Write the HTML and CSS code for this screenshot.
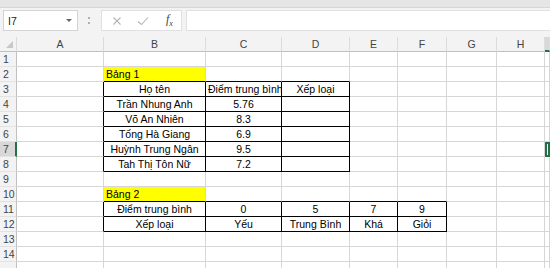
FILE: index.html
```html
<!DOCTYPE html>
<html lang="vi">
<head>
    <meta charset="UTF-8">
    <meta name="viewport" content="width=device-width, initial-scale=1.0">
    <title>Bảng xếp loại</title>
    <link rel="stylesheet" href="styles.css">
</head>
<body>
    <div class="ribbon"></div>
    <div class="formula-bar">
        <div class="name-box">
            <span>I7</span>
            <span class="caret"></span>
        </div>
        <div class="grip"></div>
        <div class="fx-buttons">
            <svg class="fx-icon" width="10" height="10" viewBox="0 0 10 10">
                <path d="M1.5 1.5 L8.5 8.5 M8.5 1.5 L1.5 8.5" stroke="#b5b5b5" stroke-width="1.1" fill="none"/>
            </svg>
            <svg class="fx-icon" width="12" height="10" viewBox="0 0 12 10">
                <path d="M1 5.5 L4.5 8.5 L11 1.5" stroke="#b5b5b5" stroke-width="1.1" fill="none"/>
            </svg>
            <span class="fx">f<sub>x</sub></span>
        </div>
        <div class="formula-input"></div>
    </div>

    <table class="sheet">
        <colgroup>
            <col class="w-head">
            <col class="w-a">
            <col class="w-b">
            <col class="w-c">
            <col class="w-d">
            <col class="w-e">
            <col class="w-f">
            <col class="w-g">
            <col class="w-h">
            <col class="w-i">
        </colgroup>
        <tr class="col-head">
            <th class="corner"><span class="corner-mark"></span></th>
            <th>A</th><th>B</th><th>C</th><th>D</th><th>E</th><th>F</th><th>G</th><th>H</th><th class="sel-col"></th>
        </tr>
        <tr>
            <th>1</th><td></td><td></td><td></td><td></td><td></td><td></td><td></td><td></td><td></td>
        </tr>
        <tr>
            <th>2</th><td></td><td class="title bb">Bảng 1</td><td class="bb"></td><td class="bb"></td><td></td><td></td><td></td><td></td><td></td>
        </tr>
        <tr>
            <th>3</th><td class="br"></td><td class="box">Họ tên</td><td class="box">Điểm trung bình</td><td class="box">Xếp loại</td><td></td><td></td><td></td><td></td><td></td>
        </tr>
        <tr>
            <th>4</th><td class="br"></td><td class="box">Trần Nhung Anh</td><td class="box">5.76</td><td class="box"></td><td></td><td></td><td></td><td></td><td></td>
        </tr>
        <tr>
            <th>5</th><td class="br"></td><td class="box">Võ An Nhiên</td><td class="box">8.3</td><td class="box"></td><td></td><td></td><td></td><td></td><td></td>
        </tr>
        <tr>
            <th>6</th><td class="br"></td><td class="box">Tống Hà Giang</td><td class="box">6.9</td><td class="box"></td><td></td><td></td><td></td><td></td><td></td>
        </tr>
        <tr>
            <th class="sel-row">7</th><td class="br"></td><td class="box">Huỳnh Trung Ngân</td><td class="box">9.5</td><td class="box"></td><td></td><td></td><td></td><td></td><td class="selected"></td>
        </tr>
        <tr>
            <th>8</th><td class="br"></td><td class="box">Tah Thị Tôn Nữ</td><td class="box">7.2</td><td class="box"></td><td></td><td></td><td></td><td></td><td></td>
        </tr>
        <tr>
            <th>9</th><td></td><td></td><td></td><td></td><td></td><td></td><td></td><td></td><td></td>
        </tr>
        <tr>
            <th>10</th><td></td><td class="title bb">Bảng 2</td><td class="bb"></td><td class="bb"></td><td class="bb"></td><td class="bb"></td><td></td><td></td><td></td>
        </tr>
        <tr>
            <th>11</th><td class="br"></td><td class="box">Điểm trung bình</td><td class="box">0</td><td class="box">5</td><td class="box">7</td><td class="box">9</td><td></td><td></td><td></td>
        </tr>
        <tr>
            <th>12</th><td class="br"></td><td class="box">Xếp loại</td><td class="box">Yếu</td><td class="box">Trung Bình</td><td class="box">Khá</td><td class="box">Giỏi</td><td></td><td></td><td></td>
        </tr>
        <tr>
            <th>13</th><td></td><td></td><td></td><td></td><td></td><td></td><td></td><td></td><td></td>
        </tr>
        <tr>
            <th>14</th><td></td><td></td><td></td><td></td><td></td><td></td><td></td><td></td><td></td>
        </tr>
        <tr>
            <th></th><td></td><td></td><td></td><td></td><td></td><td></td><td></td><td></td><td></td>
        </tr>
    </table>
</body>
</html>
```

FILE: styles.css
```css
:root {
    --toolbar: #f3f3f3;
    --ribbon: #e6e6e6;
    --grid: #d6d6d6;
    --head: #f3f3f3;
    --head-line: #c0c0c0;
    --head-text: #444;
    --head-sel: #d8d8d8;
    --green: #217346;
    --yellow: #ffff00;
}

* {
    box-sizing: border-box;
    margin: 0;
    padding: 0;
}

body {
    width: 550px;
    height: 268px;
    overflow: hidden;
    background: #fff;
    font-family: 'Liberation Sans', Arial, sans-serif;
    font-size: 10.5px;
    color: #000;
}

.ribbon {
    height: 8px;
    background: var(--ribbon);
    border-bottom: 1px solid #d6d6d6;
}

.formula-bar {
    display: flex;
    align-items: center;
    height: 29px;
    padding: 1px 0 5px 3px;
    background: var(--toolbar);
}

.name-box {
    display: flex;
    align-items: center;
    justify-content: space-between;
    width: 75px;
    height: 21px;
    padding: 0 5px 0 4px;
    background: #fff;
    border: 1px solid #d4d4d4;
    color: #222;
}

.caret {
    width: 0;
    height: 0;
    border-left: 3px solid transparent;
    border-right: 3px solid transparent;
    border-top: 3px solid #666;
}

.grip {
    width: 2px;
    height: 7px;
    margin: 0 11px 0 10px;
    border-left: 2px dotted #b0b0b0;
}

.fx-buttons {
    display: flex;
    align-items: center;
    width: 81px;
    height: 21px;
    padding: 0 0 0 10px;
    background: #fff;
    border: 1px solid #e0e0e0;
}

.fx-icon {
    margin-right: 15px;
}

.fx {
    margin-left: 2px;
    font-family: 'Liberation Serif', serif;
    font-style: italic;
    font-size: 12px;
    color: #444;
}

.fx sub {
    font-size: 8px;
}

.formula-input {
    flex: 1;
    height: 21px;
    margin-left: 4px;
    background: #fff;
    border: 1px solid #e0e0e0;
    border-right: none;
}

.sheet {
    table-layout: fixed;
    width: 550px;
    border-collapse: separate;
    border-spacing: 0;
}

.w-head { width: 17px; }
.w-a { width: 87px; }
.w-b { width: 102px; }
.w-c { width: 76px; }
.w-d { width: 68px; }
.w-e { width: 48px; }
.w-f { width: 49px; }
.w-g { width: 50px; }
.w-h { width: 48px; }
.w-i { width: 5px; }

.sheet td,
.sheet th {
    height: 14px;
    line-height: 14px;
    padding: 0 2px;
    white-space: nowrap;
    overflow: hidden;
    vertical-align: bottom;
    border-right: 1px solid var(--grid);
    border-bottom: 1px solid var(--grid);
}

.sheet th {
    padding: 0 0 0 3px;
    background: var(--head);
    color: var(--head-text);
    font-weight: normal;
    text-align: left;
    border-right-color: var(--head-line);
    border-bottom-color: #e2e2e2;
}

.col-head th {
    height: 15px;
    padding: 0;
    text-align: center;
    vertical-align: middle;
    border-right-color: #dcdcdc;
    border-bottom: 1px solid var(--head-line);
}

.corner {
    position: relative;
}

.corner-mark {
    position: absolute;
    right: 3px;
    bottom: 3px;
    width: 0;
    height: 0;
    border-left: 7px solid transparent;
    border-bottom: 7px solid #c8c8c8;
}

.col-head .sel-col {
    background: var(--head-sel);
    border-bottom: 2px solid var(--green);
}

.sheet .sel-row {
    background: var(--head-sel);
    border-right: 2px solid var(--green);
}

.title {
    background: var(--yellow);
    text-align: left;
}

.box {
    text-align: center;
    border-right-color: #000 !important;
    border-bottom-color: #000 !important;
}

.bb {
    border-bottom-color: #000 !important;
}

.br {
    border-right-color: #000 !important;
}

.selected {
    outline: 2px solid var(--green);
    outline-offset: -2px;
}
```
